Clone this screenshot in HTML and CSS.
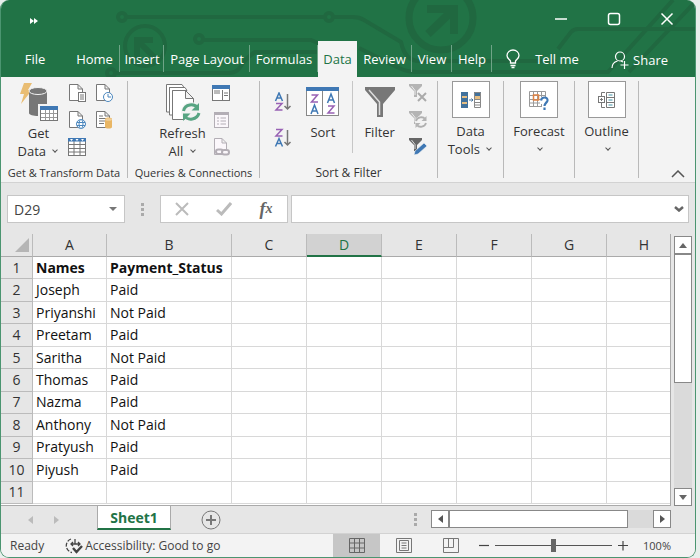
FILE: index.html
```
<!DOCTYPE html>
<html lang="en">
<head>
  <meta charset="UTF-8">
  <title>Payment Status</title>
  <meta name="viewport" content="width=device-width, initial-scale=1.0">
  <link rel="stylesheet" href="styles.css">
</head>
<body>
  <div class="window">
    <header class="top">
      <svg class="circuit" width="695" height="77" viewBox="0 0 695 77" fill="none" stroke="#206840" stroke-width="4">
        <circle cx="121" cy="17" r="4"/><circle cx="328" cy="17" r="4"/><circle cx="198" cy="39" r="4"/><circle cx="110" cy="73" r="4"/>
        <path d="M126 17H323M333 17H352Q358 17 363 20L400 42Q404 61 418 61H555M203 40H310L319 44M115 73H228Q236 73 240 66T254 52H319M358 48L398 68Q406 72 416 72H607L672 0M628 72L694 2M557 49L570 32Q573 29 577 29H695"/>
        <circle cx="144" cy="46" r="20"/>
        <path d="M136 60V40H152M137 41L155 59" stroke-width="6"/>
        <circle cx="440" cy="18" r="32" stroke-width="7"/>
        <path d="M426 9H453V34M452 10L427 34" stroke-width="8"/>
      </svg>
      <div class="titlebar">
        <button class="quick" aria-label="More commands"><svg width="8" height="6" viewBox="0 0 8 6" fill="#fff"><path d="M0 0L4 3L0 6ZM4 0L8 3L4 6Z"/></svg></button>
        <button class="win-btn" aria-label="Minimize"><svg width="14" height="14" viewBox="0 0 14 14" stroke="#fff" stroke-width="1.5"><path d="M1 7H13"/></svg></button>
        <button class="win-btn" aria-label="Maximize"><svg width="14" height="14" viewBox="0 0 14 14" fill="none" stroke="#fff" stroke-width="1.5"><rect x="1.5" y="1.5" width="11" height="11" rx="2"/></svg></button>
        <button class="win-btn" aria-label="Close"><svg width="14" height="14" viewBox="0 0 14 14" stroke="#fff" stroke-width="1.5"><path d="M1.500 1.500L12.500 12.500M12.500 1.500L1.500 12.500"/></svg></button>
      </div>
      <nav class="tabs">
        <button class="tab">File</button>
        <button class="tab line">Home</button>
        <button class="tab line">Insert</button>
        <button class="tab line">Page Layout</button>
        <button class="tab line">Formulas</button>
        <button class="tab active">Data</button>
        <button class="tab line">Review</button>
        <button class="tab line">View</button>
        <button class="tab line">Help</button>
        <button class="tab tell"><svg width="16" height="20" viewBox="0 0 16 20" fill="none" stroke="#fff" stroke-width="1.3"><path d="M5.500 14V12C4.500 10 2 9.500 2 6.500A6 5.500 0 0 1 14 6.500C14 9.500 11.500 10 10.500 12V14ZM5.500 16.500H10.500M6.500 18.500H9.500"/></svg>Tell me</button>
        <button class="tab share"><svg width="18" height="18" viewBox="0 0 18 18" fill="none" stroke="#fff" stroke-width="1.2"><circle cx="9" cy="5.500" r="4.500"/><path d="M1 17C1 13 3 11 6.500 10M10 10L12 11M13.500 10V18M9.500 14H17.500"/></svg>Share</button>
      </nav>
    </header>

    <section class="ribbon">
      <div class="group">
        <div class="tools data-tools">
          <button class="big">
            <svg width="40" height="40" viewBox="0 0 40 40">
              <path d="M5 0H13L9 7H13L2 21L5 11H1Z" fill="#e9bd73"/>
              <path d="M10 8V30C10 34 28 34 28 30V8Z" fill="#777"/><ellipse cx="19" cy="8" rx="9" ry="3.500" fill="#777" stroke="#f3f3f3"/>
              <rect x="19" y="21" width="20" height="17" fill="#f3f3f3"/><rect x="21.500" y="23.500" width="17" height="14" fill="#fff" stroke="#777"/>
              <rect x="21" y="23" width="18" height="4" fill="#3f78b4"/><path d="M22 30.500H38M22 34.500H38M26.500 27V37M30.500 27V37M34.500 27V37" stroke="#999"/>
            </svg>
            <span>Get<br>Data <i class="chev"></i></span>
          </button>
          <div class="minis two">
            <button class="mini" aria-label="From Text/CSV"><svg width="18" height="18" viewBox="0 0 18 18" fill="#fff" stroke="#777"><path d="M1.500 .5H10L14.500 5V16.500H1.500ZM10 .5V5H14.500"/><rect x="10.500" y="8.500" width="7" height="9"/><path d="M12 11H16M12 13H16M12 15H16"/></svg></button>
            <button class="mini" aria-label="Recent Sources"><svg width="18" height="18" viewBox="0 0 18 18" fill="#fff" stroke="#777"><path d="M1.500 .5H10L14.500 5V16.500H1.500ZM10 .5V5H14.500"/><circle cx="13" cy="13" r="4.500" stroke="#4a86bd"/><path d="M13 10V13H16" stroke="#4a86bd" fill="none"/></svg></button>
            <button class="mini" aria-label="From Web"><svg width="18" height="18" viewBox="0 0 18 18" fill="#fff" stroke="#777"><path d="M1.500 .5H10L14.500 5V16.500H1.500ZM10 .5V5H14.500"/><g stroke="#4a86bd"><circle cx="13" cy="13" r="4.500"/><ellipse cx="13" cy="13" rx="2" ry="4.500"/><path d="M9 11.500H17M9 14.500H17"/></g></svg></button>
            <button class="mini" aria-label="Existing Connections"><svg width="18" height="18" viewBox="0 0 18 18" fill="#fff" stroke="#777"><path d="M1.500 .5H10L14.500 5V16.500H1.500ZM10 .5V5H14.500"/><path d="M4 5H8M4 7.500H12M4 10H10M4 12.500H9"/><path d="M10 8V16C10 18 17 18 17 16V8C17 6 10 6 10 8Z" fill="#e9b664" stroke="none"/><ellipse cx="13.500" cy="8.500" rx="3.500" ry="1.300" fill="#f1cf98" stroke="none"/></svg></button>
            <button class="mini" aria-label="From Table"><svg width="18" height="20" viewBox="0 0 18 20" fill="#fff" stroke="#777"><rect x=".5" y="1.500" width="17" height="17"/><path d="M1 7.500H17M1 11.500H17M1 15H17M6 4V18M12 4V18"/><rect x="0" y="1" width="18" height="3.500" fill="#3f78b4" stroke="none"/><path d="M2 2H5L3.500 4ZM7.500 2H10.500L9 4ZM13 2H16L14.500 4Z" stroke="none"/></svg></button>
          </div>
        </div>
        <h2>Get &amp; Transform Data</h2>
      </div>

      <div class="group">
        <div class="tools">
          <button class="big">
            <svg width="40" height="40" viewBox="0 0 40 40" fill="#fff" stroke="#777">
              <path d="M3.500 1.500H19L21 4.500H6.500V29H3.500ZM6.500 4.500H22L24 7.500H9.500V32H6.500Z"/><path d="M9.500 7.500H22.500L30.500 15.500V36.500H9.500ZM22.500 7.500V15.500H30.500"/>
              <circle cx="28" cy="29" r="10" fill="#f3f3f3" stroke="none"/>
              <path d="M20.500 28C22 21 31 20 35 25M36 30C34 37 25 38 21.500 33" fill="none" stroke="#58a583" stroke-width="3"/><path d="M36 20V27.500H28.500ZM20 38V30.500H27.500Z" fill="#58a583" stroke="none"/>
            </svg>
            <span>Refresh<br>All <i class="chev"></i></span>
          </button>
          <div class="minis">
            <button class="mini" aria-label="Queries and Connections"><svg width="18" height="18" viewBox="0 0 18 18" fill="#fff" stroke="#777"><rect x=".5" y="1.500" width="17" height="15"/><path d="M2 7H8M2 9H8M10.500 6V16M12 9H16M12 11.500H16"/><rect x="0" y="1" width="18" height="4" fill="#3f78b4" stroke="none"/></svg></button>
            <button class="mini" aria-label="Properties"><svg width="18" height="18" viewBox="0 0 18 18" fill="#fbf7fb" stroke="#b3aeb5"><rect x="2.500" y="1.500" width="14" height="15"/><path d="M2 3H17" stroke-width="2"/><path d="M5 7H7M5 10H7M5 13H7M8.500 7H14M8.500 10H14M8.500 13H14"/></svg></button>
            <button class="mini" aria-label="Edit Links"><svg width="18" height="18" viewBox="0 0 18 18" fill="#fbf7fb" stroke="#b3aeb5"><path d="M2.500 .5H10L14.500 5V16.500H2.500ZM10 .5V5H14.500"/><g stroke-width="2"><rect x="4" y="11.500" width="7" height="4.500" rx="2.200"/><rect x="10" y="12" width="7" height="4.500" rx="2.200"/></g></svg></button>
          </div>
        </div>
        <h2>Queries &amp; Connections</h2>
      </div>

      <div class="group">
        <div class="tools sorting">
          <div class="az">
            <button class="mini" aria-label="Sort A to Z"><svg width="18" height="20" viewBox="0 0 18 20" fill="none" stroke-width="1.500"><path d="M1.500 9L5 1L8.500 9M2.800 6H7.200" stroke="#3f78b4"/><path d="M2 11.500H8L2 18H8.500" stroke="#9861b4"/><path d="M13.500 2V17M10.500 14L13.500 17L16.500 14" stroke="#777"/></svg></button>
            <button class="mini" aria-label="Sort Z to A"><svg width="18" height="20" viewBox="0 0 18 20" fill="none" stroke-width="1.500"><path d="M2 1.500H8L2 8H8.500" stroke="#9861b4"/><path d="M1.500 18.500L5 10.500L8.500 18.500M2.800 15.500H7.200" stroke="#3f78b4"/><path d="M13.500 2V17M10.500 14L13.500 17L16.500 14" stroke="#777"/></svg></button>
          </div>
          <button class="big sort">
            <svg width="33" height="30" viewBox="0 0 33 30" fill="none"><rect x=".5" y=".5" width="32" height="28" fill="#fff" stroke="#888"/><rect width="33" height="4" fill="#3f78b4"/><path d="M16.500 4V29" stroke="#888"/><g stroke-width="1.500"><path d="M5.500 8H11.500L5.500 15H12M22 19H28L22 26H28.500" stroke="#9861b4"/><path d="M5 27L8.500 18L12 27M6 24H11M21.500 16L25 7L28.500 16M22.500 13H27.500" stroke="#3f78b4"/></g></svg>
            <span>Sort</span>
          </button>
          <button class="big filter">
            <svg width="30" height="30" viewBox="0 0 30 30"><path d="M0 0H30V3L18 17V30H12V17L0 3Z" fill="#777"/><path d="M4 3L14.500 15V28" fill="none" stroke="#ddd" stroke-width="1.500"/></svg>
            <span>Filter</span>
          </button>
          <div class="minis">
            <button class="mini" aria-label="Clear"><svg width="18" height="18" viewBox="0 0 18 18" fill="#b4b4b4"><path d="M0 0H13V2L8 7V13H5V7L0 2Z"/><path d="M2.500 2L6 6.500V11" fill="none" stroke="#eee"/><path d="M9 9L17 17M17 9L9 17" stroke="#aaa" stroke-width="2"/></svg></button>
            <button class="mini" aria-label="Reapply"><svg width="18" height="18" viewBox="0 0 18 18" fill="#b4b4b4"><path d="M0 0H13V2L8 7V13H5V7L0 2Z"/><path d="M2.500 2L6 6.500V11" fill="none" stroke="#eee"/><circle cx="12" cy="11" r="6" fill="#f3f3f3"/><path d="M7 10C8 6 14 5 16 8M17 12C16 16 10 17 8 14" stroke="#b0b0b0" stroke-width="1.800" fill="none"/><path d="M17.500 5V10H12.500ZM6.500 17V12H11.500Z"/></svg></button>
            <button class="mini" aria-label="Advanced"><svg width="18" height="18" viewBox="0 0 18 18" fill="#666"><path d="M0 0H13V2L8 7V13H5V7L0 2Z"/><path d="M2.500 2L6 6.500V11" fill="none" stroke="#ddd"/><path d="M5 17L6 13L15 5L18 8L9 16Z" fill="#3f78b4" stroke="#f3f3f3" stroke-width=".6"/></svg></button>
          </div>
        </div>
        <h2>Sort &amp; Filter</h2>
      </div>

      <div class="group">
        <button class="menu">
          <span class="box"><svg width="20" height="18" viewBox="0 0 20 18"><path d="M0 1H7V17H0ZM13 1H20V5H13Z" fill="#41719c"/><path d="M1 5H6V7H1ZM1 11H6V13H1ZM14 5H19V8H14Z" fill="#e5bd82"/><path d="M13.500 1.500H19.500V16.500H13.500ZM13.500 8.500H19.500M13.500 11.500H19.500M13.500 14H19.500" fill="none" stroke="#888"/><path d="M8 9H12M10.500 7.500L12 9L10.500 10.500" stroke="#41719c" fill="none"/></svg></span>
          <span>Data<br>Tools <i class="chev"></i></span>
        </button>
      </div>
      <div class="group">
        <button class="menu">
          <span class="box"><svg width="20" height="20" viewBox="0 0 20 20" fill="none"><path d="M.5 1.500H16.500V16.500H.5ZM.5 5.500H16.500M.5 9.500H16.500M.5 13H16.500M4.500 1.500V16.500M8.500 1.500V16.500M12.500 1.500V16.500" stroke="#999"/><rect x="4.500" y="5" width="5" height="5" stroke="#df8344" stroke-width="1.500"/><path d="M11 7H20V20H13V14H11Z" fill="#fff"/><path d="M12 10.500C12.500 6.500 19 6.500 18.500 10.500C18 13 15.500 13 15.500 16M15.500 17.500V20" stroke="#3f78b4" stroke-width="2.200"/></svg></span>
          <span>Forecast<br><i class="chev"></i></span>
        </button>
      </div>
      <div class="group">
        <button class="menu">
          <span class="box"><svg width="18" height="18" viewBox="0 0 18 18" fill="none" stroke="#777"><path d="M8.500 1.500H16.500V16.500H8.500ZM8.500 6.500H16.500M8.500 11.500H16.500M7 1.500H3.500V5M7 16.500H3.500V12"/><rect x=".5" y="5.500" width="6" height="6"/><path d="M2 8.500H5M3.500 7V10"/><path d="M10.500 4H14.500M10.500 9H14.500M10.500 14H14.500" stroke="#3f94a8"/></svg></span>
          <span>Outline<br><i class="chev"></i></span>
        </button>
      </div>
      <button class="collapse" aria-label="Collapse the ribbon"><svg width="14" height="8" viewBox="0 0 14 8" fill="none" stroke="#555" stroke-width="1.500"><path d="M1 7L7 1L13 7"/></svg></button>
    </section>

    <section class="formula-row">
      <div class="name-box">
        <input type="text" value="D29" aria-label="Name box">
        <button aria-label="Show names"><svg width="8" height="4" viewBox="0 0 8 4" fill="#777"><path d="M0 0H8L4 4Z"/></svg></button>
      </div>
      <span class="dots"></span>
      <div class="fx-box">
        <button aria-label="Cancel"><svg width="16" height="14" viewBox="0 0 16 14" stroke="#bbb" stroke-width="2"><path d="M2 1L14 13M14 1L2 13"/></svg></button>
        <button aria-label="Enter"><svg width="16" height="14" viewBox="0 0 16 14" fill="none" stroke="#bbb" stroke-width="3"><path d="M1 8L5.500 12L15 1"/></svg></button>
        <button class="fx" aria-label="Insert function">f<small>x</small></button>
      </div>
      <div class="formula">
        <input type="text" aria-label="Formula bar">
        <button aria-label="Expand formula bar"><svg width="10" height="6" viewBox="0 0 10 6" fill="none" stroke="#666" stroke-width="2.500"><path d="M1 1L5 4.500L9 1"/></svg></button>
      </div>
    </section>

    <main class="sheet-row">
      <div class="sheet">
        <table>
          <colgroup><col class="c-num"><col class="c-a"><col class="c-b"><col><col><col><col><col><col></colgroup>
          <thead>
            <tr><th class="corner"><svg width="14" height="14" viewBox="0 0 14 14" fill="#b5b5b5"><path d="M14 0V14H0Z"/></svg></th><th>A</th><th>B</th><th>C</th><th class="current">D</th><th>E</th><th>F</th><th>G</th><th>H</th></tr>
          </thead>
          <tbody>
            <tr class="names"><th>1</th><td>Names</td><td>Payment_Status</td><td></td><td></td><td></td><td></td><td></td><td></td></tr>
            <tr><th>2</th><td>Joseph</td><td>Paid</td><td></td><td></td><td></td><td></td><td></td><td></td></tr>
            <tr><th>3</th><td>Priyanshi</td><td>Not Paid</td><td></td><td></td><td></td><td></td><td></td><td></td></tr>
            <tr><th>4</th><td>Preetam</td><td>Paid</td><td></td><td></td><td></td><td></td><td></td><td></td></tr>
            <tr><th>5</th><td>Saritha</td><td>Not Paid</td><td></td><td></td><td></td><td></td><td></td><td></td></tr>
            <tr><th>6</th><td>Thomas</td><td>Paid</td><td></td><td></td><td></td><td></td><td></td><td></td></tr>
            <tr><th>7</th><td>Nazma</td><td>Paid</td><td></td><td></td><td></td><td></td><td></td><td></td></tr>
            <tr><th>8</th><td>Anthony</td><td>Not Paid</td><td></td><td></td><td></td><td></td><td></td><td></td></tr>
            <tr><th>9</th><td>Pratyush</td><td>Paid</td><td></td><td></td><td></td><td></td><td></td><td></td></tr>
            <tr><th>10</th><td>Piyush</td><td>Paid</td><td></td><td></td><td></td><td></td><td></td><td></td></tr>
            <tr><th>11</th><td></td><td></td><td></td><td></td><td></td><td></td><td></td><td></td></tr>
          </tbody>
        </table>
      </div>
      <div class="vscroll">
        <button class="arrow" aria-label="Scroll up"><svg width="8" height="5" viewBox="0 0 8 5" fill="#666"><path d="M0 5H8L4 0Z"/></svg></button>
        <div class="thumb"></div>
        <button class="arrow end" aria-label="Scroll down"><svg width="8" height="5" viewBox="0 0 8 5" fill="#666"><path d="M0 0H8L4 5Z"/></svg></button>
      </div>
    </main>

    <section class="sheet-tabs">
      <button class="step" aria-label="Previous sheet"><svg width="5" height="8" viewBox="0 0 5 8" fill="#bbb"><path d="M5 0V8L0 4Z"/></svg></button>
      <button class="step" aria-label="Next sheet"><svg width="5" height="8" viewBox="0 0 5 8" fill="#bbb"><path d="M0 0V8L5 4Z"/></svg></button>
      <button class="sheet-tab">Sheet1</button>
      <button class="add" aria-label="New sheet"><svg width="20" height="20" viewBox="0 0 20 20" fill="none" stroke="#777"><circle cx="10" cy="10" r="9"/><path d="M10 5V15M5 10H15" stroke-width="2"/></svg></button>
      <span class="dots"></span>
      <div class="hscroll">
        <button class="arrow" aria-label="Scroll left"><svg width="5" height="8" viewBox="0 0 5 8" fill="#555"><path d="M5 0V8L0 4Z"/></svg></button>
        <div class="thumb"></div>
        <button class="arrow end" aria-label="Scroll right"><svg width="5" height="8" viewBox="0 0 5 8" fill="#555"><path d="M0 0V8L5 4Z"/></svg></button>
      </div>
    </section>

    <footer class="status">
      <span class="ready">Ready</span>
      <button class="access"><svg width="18" height="16" viewBox="0 0 18 16" fill="none" stroke="#444" stroke-width="1.300"><path d="M6 1A7 7 0 0 0 7 14.500" stroke-dasharray="4 1.500"/><path d="M10 1V6M6 6H15M8 4L6 6L8 8M13 4L15 6L13 8"/><path d="M8 10L11.500 14L17 8" stroke-width="2.400"/></svg>Accessibility: Good to go</button>
      <button class="view on" aria-label="Normal"><svg width="16" height="15" viewBox="0 0 16 15" fill="none" stroke="#666"><path d="M.5 .5H15.500V14.500H.5ZM.5 5H15.500M.5 10H15.500M5.500 .5V14.500M10.500 .5V14.500"/></svg></button>
      <button class="view" aria-label="Page Layout view"><svg width="16" height="15" viewBox="0 0 16 15" fill="none" stroke="#777"><path d="M.5 .5H15.500V14.500H.5ZM3.500 2.500H12.500V12.500H3.500ZM5.500 5H10.500M5.500 7.500H10.500M5.500 10H10.500"/></svg></button>
      <button class="view" aria-label="Page Break Preview"><svg width="16" height="15" viewBox="0 0 16 15" fill="none" stroke="#777"><path d="M.5 .5H15.500V14.500H.5ZM1 9.500H10.500V.5M5.500 .5V9.500"/></svg></button>
      <div class="zoom">
        <button aria-label="Zoom out"><svg width="10" height="10" viewBox="0 0 10 10" stroke="#444"><path d="M0 4.500H10" stroke-width="1.200"/></svg></button>
        <input type="range" min="0" max="100" value="50" aria-label="Zoom">
        <button aria-label="Zoom in"><svg width="10" height="10" viewBox="0 0 10 10" stroke="#444"><path d="M0 4.500H10M5 0V9.500" stroke-width="1.200"/></svg></button>
      </div>
      <span class="percent">100%</span>
    </footer>
  </div>
</body>
</html>
```
FILE: styles.css
```
* {
  box-sizing: border-box;
}

body {
  margin: 0;
  background: #e8efec;
  color: #333;
  font-family: "Open Sans", "Noto Sans", sans-serif;
  font-size: 13px;
}

button, input {
  margin: 0;
  padding: 0;
  border: 0;
  background: none;
  color: inherit;
  font: inherit;
}

button {
  display: flex;
  align-items: center;
  justify-content: center;
}

svg {
  display: block;
  flex: none;
}

.window {
  display: flex;
  flex-direction: column;
  min-height: 100vh;
  margin-right: 4px;
  border: 1px solid #4b9570;
  border-top: 0;
  border-radius: 9px;
  background: #e6e6e6;
  overflow: hidden;
}

/* title bar and tabs */
.top {
  position: relative;
  background: #217346;
  color: #fff;
  overflow: hidden;
}

.circuit {
  position: absolute;
  top: 0;
  left: 0;
}

.titlebar, .tabs {
  position: relative;
  display: flex;
}

.titlebar {
  height: 41px;
  padding-right: 2px;
}

.quick {
  width: 66px;
  margin-right: auto;
}

.win-btn {
  width: 53px;
  padding-bottom: 4px;
}

.tabs {
  display: grid;
  grid-template-columns: 68px 51px 44px 86px 68px 39px 55px 40px 40px 100px 1fr;
  height: 36px;
}

.tab {
  position: relative;
  white-space: nowrap;
}

.line::after {
  content: "";
  position: absolute;
  top: 4px;
  right: 0;
  width: 1px;
  height: 27px;
  background: #6fa487;
}

.active {
  background: #f3f3f3;
  color: #217346;
}

.tell {
  gap: 14px;
}

.share {
  gap: 4px;
  padding: 2px 27px 0 0;
  justify-content: flex-end;
}

/* ribbon */
.ribbon {
  display: grid;
  grid-template-columns: 127px 132px 178px 66px 71px 64px 1fr;
  height: 106px;
  padding: 4px 0;
  background: #f3f3f3;
  border-bottom: 1px solid #d2d2d2;
}

.group {
  display: flex;
  flex-direction: column;
  border-right: 1px solid #b9b9b9;
}

.group h2 {
  margin: auto 0 0;
  font-size: 12px;
  line-height: 10px;
  font-weight: normal;
  text-align: center;
  white-space: nowrap;
}

/* the two longest labels fill their group from edge to edge */
.group:first-child h2, .group:nth-child(2) h2 {
  font-size: 11px;
}

.tools {
  display: flex;
  justify-content: center;
}

.data-tools {
  padding-left: 5px;
}

.big, .menu {
  flex-direction: column;
  justify-content: flex-start;
  font-size: 13px;
  line-height: 18px;
  white-space: nowrap;
}

.big {
  width: 52px;
  padding-top: 2px;
}

.big span {
  padding-top: 1px;
}

.minis {
  display: grid;
  grid-auto-rows: 27px;
  padding-top: 2px;
  padding-left: 2px;
}

.two {
  grid-template-columns: 27px 27px;
}

.mini {
  width: 20px;
  height: 20px;
}

.chev {
  display: inline-block;
  width: 4px;
  height: 4px;
  margin: 0 2px 4px 4px;
  border: solid #555;
  border-width: 0 1px 1px 0;
  transform: rotate(45deg);
}

.sorting {
  justify-content: space-between;
  padding: 0 9px 0 13px;
}

.az {
  display: grid;
  grid-auto-rows: 36px;
  padding-top: 11px;
}

.sort, .filter {
  padding-top: 6px;
}

.sort span, .filter span {
  padding-top: 6px;
}

.sort {
  width: 60px;
  height: 72px;
  border-right: 1px solid #c6c6c6;
}

.menu span {
  padding-top: 4px;
}

.menu .box {
  display: flex;
  align-items: center;
  justify-content: center;
  width: 38px;
  height: 37px;
  padding: 0;
  background: #fff;
  border: 1px solid #999;
}

.collapse {
  align-self: end;
  justify-self: end;
  padding: 0 10px 0 0;
}

/* formula bar */
.formula-row {
  display: flex;
  height: 51px;
  padding: 12px 6px 11px 6px;
}

.name-box, .fx-box, .formula {
  display: flex;
  background: #fff;
  border: 1px solid #c6c6c6;
}

.name-box {
  width: 118px;
}

.name-box input {
  flex: 1;
  min-width: 0;
  padding-left: 6px;
  color: #444;
  font-size: 14px;
}

.name-box button {
  width: 22px;
}

.dots {
  width: 3px;
  height: 13px;
  background: repeating-linear-gradient(#aaa 0 3px, transparent 3px 5px);
}

.formula-row .dots {
  align-self: center;
  margin: 0 16px;
}

.fx-box {
  width: 128px;
  margin-right: 3px;
}

.fx-box button {
  flex: 1;
}

.fx-box .fx {
  color: #666;
  font: italic bold 18px "Liberation Serif", serif;
}

.fx small {
  font-size: 14px;
}

.formula {
  flex: 1;
}

.formula input {
  flex: 1;
  min-width: 0;
}

.formula button {
  width: 18px;
}

/* grid */
.sheet-row {
  display: flex;
  flex: 1;
}

.sheet {
  flex: 1;
  min-width: 0;
  overflow: hidden;
  background: #fff;
  border-right: 1px solid #aaa;
  border-bottom: 1px solid #aaa;
}

table {
  width: 681px;
  height: 270px;
  table-layout: fixed;
  border-collapse: separate;
  border-spacing: 0;
  font-size: 14px;
  line-height: 18px;
}

col {
  width: 75px;
}

.c-num {
  width: 32px;
}

.c-a {
  width: 74px;
}

.c-b {
  width: 125px;
}

th, td {
  padding: 0;
  border-right: 1px solid #d8d8d8;
  border-bottom: 1px solid #d8d8d8;
}

th {
  background: #e6e6e6;
  border-color: #bbb;
  font-weight: normal;
}

td {
  padding-left: 3px;
  color: #111;
  text-align: left;
  white-space: nowrap;
}

thead th {
  height: 23px;
  border-bottom-color: #aaa;
}

.corner svg {
  margin-left: 14px;
}

.current {
  background: #d2d2d2;
  border-bottom: 2px solid #217346;
  color: #217346;
}

.names td {
  font-weight: bold;
}

/* scroll bars */
.vscroll {
  display: flex;
  flex-direction: column;
  width: 18px;
  margin: 2px 3px 0;
  background: #dadada;
}

.arrow, .thumb {
  background: #fff;
  border: 1px solid #888;
}

.arrow {
  flex: none;
  width: 18px;
  height: 18px;
}

.vscroll .thumb {
  height: 129px;
}

.vscroll .end {
  margin-top: auto;
}

.sheet-tabs {
  display: flex;
  height: 27px;
  padding-right: 24px;
}

.hscroll {
  display: flex;
  width: 240px;
  height: 18px;
  margin: 4px 0 0 14px;
  background: #dadada;
}

.hscroll .thumb {
  width: 179px;
}

.hscroll .end {
  margin-left: auto;
}

/* sheet tabs */
.step {
  width: 26px;
}

.step:first-child {
  margin-left: 16px;
}

.sheet-tab {
  width: 74px;
  height: 24px;
  margin-left: 28px;
  background: #fff;
  border: 1px solid #aaa;
  border-width: 0 1px 2px;
  border-bottom-color: #217346;
  color: #217346;
  font-size: 14px;
  font-weight: bold;
}

.add {
  margin-left: 30px;
}

.sheet-tabs .dots {
  align-self: center;
  margin-left: auto;
}

/* status bar */
.status {
  display: flex;
  align-items: center;
  height: 24px;
  padding: 0 24px 0 9px;
  background: #f3f3f3;
  border-top: 1px solid #d2d2d2;
  color: #444;
  font-size: 12px;
  white-space: nowrap;
}

.access {
  gap: 2px;
  margin: 0 auto 0 21px;
}

.view {
  width: 47px;
  height: 100%;
}

.on {
  background: #c6c6c6;
}

.zoom {
  display: flex;
  align-items: center;
  gap: 6px;
  margin: 0 15px 0 5px;
}

.zoom input {
  width: 117px;
  height: 14px;
  appearance: none;
  background: linear-gradient(#555, #555) center / 100% 1px no-repeat;
}

.zoom input::-webkit-slider-thumb {
  appearance: none;
  width: 5px;
  height: 13px;
  background: #666;
}

.percent {
  font-size: 11px;
}
```
